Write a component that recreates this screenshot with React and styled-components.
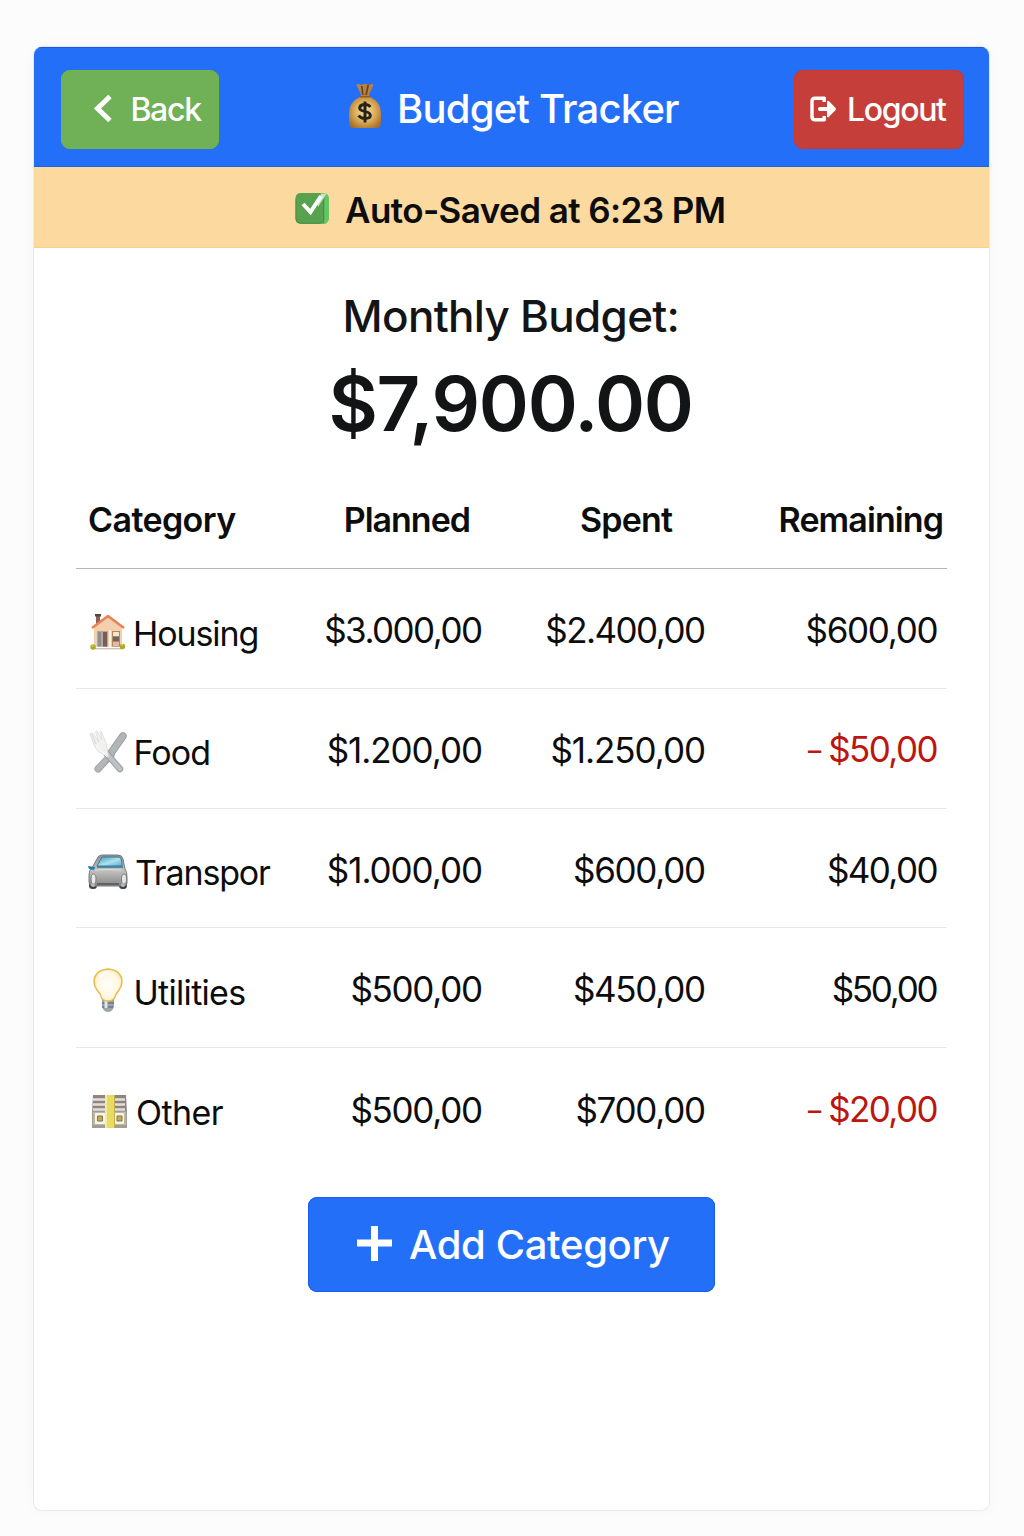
import React from "react";
import styled, { createGlobalStyle } from "styled-components";

const GlobalStyle = createGlobalStyle`
  * { box-sizing: border-box; }
  body {
    margin: 0;
    background: #fcfcfc;
    color: #0d0d0d;
    font-family: Inter, "Liberation Sans", sans-serif;
  }
  svg { display: block; flex: none; }
`;

const Page = styled.div`
  min-height: 1536px;
  padding: 47px 35.5px 25.5px 34px;
`;

const Card = styled.main`
  height: 1463px;
  background: #fff;
  border-radius: 8px;
  overflow: hidden;
  box-shadow: 0 0 0 1px #e9e9ea, 0 0 16px rgba(0, 0, 0, 0.03);
`;

const Text = styled.span`
  display: block;
  white-space: nowrap;
  font-size: ${(p) => p.$size}px;
  line-height: ${(p) => p.$line || 40}px;
  font-weight: ${(p) => p.$weight || 400};
  letter-spacing: ${(p) => p.$spacing || 0}px;
  margin-right: ${(p) => -(p.$spacing || 0)}px;
  padding-top: ${(p) => p.$drop || 0}px;
`;

const Header = styled.header`
  height: 120px;
  padding: 22.5px 24.5px 0 27.4px;
  display: flex;
  align-items: flex-start;
  background: #246ff8;
  color: #fff;
  box-shadow: inset 0 1px #1557ec, inset 0 -1px #1b62ee;
`;

const HeaderButton = styled.button`
  width: ${(p) => p.$width}px;
  height: 79px;
  border: 0;
  border-radius: 9px;
  padding: 0 0 0 ${(p) => p.$inset}px;
  display: flex;
  align-items: center;
  gap: ${(p) => p.$gap}px;
  font-family: inherit;
  color: #fff;
  background: ${(p) => p.$color};
  box-shadow: inset 0 0 0 1px ${(p) => p.$edge};
`;

const Title = styled.h1`
  margin: 0 auto 0 129px;
  height: 77px;
  display: flex;
  align-items: center;
  gap: 15px;

  svg { margin-bottom: 4px; }
`;

const Banner = styled.div`
  height: 81px;
  padding: 2px 0 0 261px;
  display: flex;
  align-items: center;
  gap: 15px;
  background: #fbd99f;
  box-shadow: inset 0 1px #f5df8e, inset 0 -1px #f8d18c;
`;

const Summary = styled.section`
  height: 222px;
  padding-top: 39px;
  display: flex;
  flex-direction: column;
  align-items: center;
  color: #131415;
`;

const Table = styled.section`
  margin: 0 42px;
`;

const Row = styled.div`
  display: grid;
  grid-template-columns: 229px 178px 223px 241px;
  align-items: center;
  height: ${(p) => p.$height || 119.75}px;
  padding-top: ${(p) => p.$top || 0}px;
  border-bottom: ${(p) => (p.$rule ? `1px solid ${p.$rule}` : "0")};
`;

const Cell = styled.div`
  display: flex;
  justify-content: flex-end;
  padding-right: ${(p) => p.$end || 0}px;
  color: ${(p) => (p.$negative ? "#bb1710" : "inherit")};
`;

const Minus = styled.span`
  margin-right: 4px;
  font-size: 29px;
  line-height: 42px;
`;

const Category = styled.div`
  display: flex;
  align-items: center;
  padding: ${(p) => p.$top ?? 7}px 0 0 12px;
  gap: ${(p) => p.$gap || 0}px;
`;

const AddButton = styled.button`
  width: 407px;
  height: 95px;
  margin: 29px auto 0 274px;
  padding: 0 0 0 49px;
  border: 0;
  border-radius: 9px;
  display: flex;
  align-items: center;
  gap: 17px;
  font-family: inherit;
  color: #fff;
  background: #246ff8;
  box-shadow: inset 0 0 0 1px #155cf2;

  svg { margin-bottom: 2px; }
`;

const BackIcon = () => (
  <svg width="20" height="30" viewBox="0 0 20 30" fill="none">
    <path d="M17 2.500 4.500 14.500 17 26.500" stroke="#fff" strokeWidth="5" />
  </svg>
);

const LogoutIcon = () => (
  <svg width="26" height="26" viewBox="0 0 26 26" fill="none">
    <path d="M15 2.200H5Q2 2.200 2 5.200v15.600q0 3 3 3h10M14.200 1v5M14.200 20v5" stroke="#fff" strokeWidth="3.400" />
    <path d="M10 13h9" stroke="#fff" strokeWidth="4" strokeLinecap="round" />
    <path d="M17 5.300q1-1 2 0l6.400 6.500q1 1.200 0 2.400L19 20.700q-1 1-2 0z" fill="#fff" />
  </svg>
);

const MoneyBag = () => (
  <svg width="34" height="46" viewBox="0 0 32 46" preserveAspectRatio="none">
    <defs>
      <radialGradient id="bag" cx="50%" cy="48%" r="60%">
        <stop offset="0" stopColor="#f3dc9b" />
        <stop offset=".5" stopColor="#dfb361" />
        <stop offset="1" stopColor="#aa7027" />
      </radialGradient>
    </defs>
    <path d="M8 2q2-2 4 0 2-1 4-1t4 1q3-2 4 0l-4 9v4h-8v-4z" fill="#b98242" />
    <path d="m13 3 1 9M19 2l-2 10" stroke="#68451f" strokeWidth="1.6" />
    <path d="M11 14q5-2 10 0 10 5 10 16v9q0 6-5 6H6q-5 0-5-6v-9q0-11 10-16z" fill="url(#bag)" />
    <path d="M11 13.800h10" stroke="#8f5d24" strokeWidth="1.600" />
    <path d="M21 24q-2-3-6-2.500-4 .5-4 3.500 0 2.500 5 3.500t5 4q0 3-5 3-4 0-6-3M16 18.500v21" fill="none" stroke="#272318" strokeWidth="2.800" />
  </svg>
);

const CheckIcon = () => (
  <svg width="35" height="33" viewBox="0 0 35 33">
    <path d="M27 1h3q4 1 4 6v19q0 4-4 6h-4z" fill="#62c663" />
    <rect x=".5" y="1" width="29" height="31" rx="5" fill="#58a14e" />
    <path d="M1 7v20q0 4 4 4h22M28.500 8v23" fill="none" stroke="#469242" />
    <path d="m22 10 4-8 6-1-9 14z" fill="#cce0c2" />
    <path d="m8 12 7.500 8L26 4" fill="none" stroke="#fff" strokeWidth="4" />
  </svg>
);

const HouseIcon = () => (
  <svg width="38" height="38" viewBox="0 0 38 38">
    <path d="M7 2h4v12H7z" fill="#896359" />
    <path d="M6 1h6v2.500H6z" fill="#59443c" />
    <path d="M5 14 19 3l14 10v22H5z" fill="#f4cfae" />
    <path d="M3 15 19 3l16 12" fill="none" stroke="#ec8056" strokeWidth="2.600" strokeLinejoin="round" />
    <path d="M8 18h11v17H8z" fill="#c99f89" />
    <path d="M9 19h3v15H9z" fill="#83939a" />
    <path d="M14 19h4v16h-4z" fill="#765f5b" />
    <path d="M20 17h2v17h-2z" fill="#fff1dd" />
    <path d="M23 18h8v16h-8z" fill="#b5846b" />
    <path d="M24 19h6v4h-6z" fill="#f4e8cb" />
    <path d="M24 24h6v4h-6z" fill="#6b675c" />
    <path d="M24 29h6v4h-6z" fill="#e2baa0" />
    <path d="M5 35.500h29" stroke="#bdaaa2" strokeWidth="1.500" />
    <path d="M7 34.500h24" stroke="#fff" strokeWidth="1.500" />
    <g fill="#a9aa25"><circle cx="4" cy="34" r="2.700" /><circle cx="33.500" cy="33.500" r="2.700" /></g>
    <g fill="#d8cf48"><circle cx="3.500" cy="33" r="1" /><circle cx="33" cy="32" r="1" /></g>
  </svg>
);

const CutleryIcon = () => (
  <svg width="40" height="44" viewBox="0 0 40 44">
    <path d="M34 6 22 23" stroke="#92979a" strokeWidth="7.500" strokeLinecap="round" />
    <path d="M34 6 22 23" stroke="#b0b5b8" strokeWidth="6" strokeLinecap="round" />
    <path d="M22 25 9 39" stroke="#989da0" strokeWidth="7" strokeLinecap="round" />
    <path d="M22 24 9 39" stroke="#b3b7b9" strokeWidth="5.500" strokeLinecap="round" />
    <path d="m18 24 13 15" stroke="#9b9fa1" strokeWidth="6.500" strokeLinecap="round" />
    <path d="m17 23 14 16" stroke="#bec1c3" strokeWidth="4.500" strokeLinecap="round" />
    <path d="m1 4 5 13q3 6 8 7l6 3-2-8q0-6-3-11L12 1l-1 .5 2 8L8 1 6.500 2 10 12 4 3 3 4l4 10L2 3z" fill="#f1f1ef" stroke="#d6d6d3" strokeWidth=".7" />
    <path d="m7 15 11 12" stroke="#fff" strokeWidth="1" />
  </svg>
);

const CarIcon = () => (
  <svg width="40" height="38" viewBox="0 0 40 38">
    <defs>
      <linearGradient id="body" x2="0" y2="1"><stop stopColor="#8e9498" /><stop offset=".5" stopColor="#c2c1bf" /><stop offset="1" stopColor="#868788" /></linearGradient>
      <linearGradient id="glass" x2="1" y2="1"><stop stopColor="#4693bc" /><stop offset=".55" stopColor="#ace3ed" /><stop offset="1" stopColor="#5aadd1" /></linearGradient>
    </defs>
    <rect x="1" y="26" width="8" height="10" rx="3.500" fill="#3f4244" />
    <rect x="31" y="26" width="8" height="10" rx="3.500" fill="#3f4244" />
    <path d="m4 15 6-11q1-2 5-2h15q4 0 5 4l2 10q2 3 2 8v6q0 3-3 3H5q-4 0-4-4v-7q0-5 3-7z" fill="url(#body)" stroke="#777a7c" />
    <path d="M14 4h17q3 1 3 9L9 13z" fill="url(#glass)" stroke="#397998" />
    <path d="m0 13 7 1-1 3-5-1z" fill="#237bb0" />
    <path d="M9 14h26" stroke="#327aa1" strokeWidth="1.500" />
    <path d="M7 17q13-1 26 0" stroke="#e0dfdc" fill="none" />
    <path d="M9 31h22" stroke="#5c5f61" strokeWidth="1.800" />
    <g fill="#e6e8e6" stroke="#797e81"><ellipse cx="5.500" cy="26" rx="2.500" ry="5" /><ellipse cx="36" cy="26" rx="2.500" ry="5" /></g>
    <circle cx="5" cy="32" r="2" fill="#b5b7b7" /><circle cx="35" cy="32" r="2" fill="#b5b7b7" />
  </svg>
);

const BulbIcon = () => (
  <svg width="30" height="46" viewBox="0 0 30 46">
    <defs><radialGradient id="bulb"><stop stopColor="#fffefa" /><stop offset=".75" stopColor="#fff9e2" /><stop offset="1" stopColor="#faedbb" /></radialGradient></defs>
    <path d="M9 31h12v8q-2 5-6 5t-6-5z" fill="#9ca4ac" />
    <path d="M9 35h12M9 39h11" stroke="#6a7888" strokeWidth="1.500" />
    <path d="M13 32v8" stroke="#e2e5e6" strokeWidth="3" />
    <path d="M9 31q-1-5-5-9-3-4-3-9Q2 2 15 1q13 1 14 12 0 5-3 9-4 5-5 9-6 4-12 0z" fill="url(#bulb)" stroke="#e9ba50" strokeWidth="1.500" />
    <path d="M7 9q3-4 8-5" fill="none" stroke="#fff" strokeWidth="3" />
  </svg>
);

const CashIcon = () => (
  <svg width="37" height="34" viewBox="0 0 37 34">
    <path d="M2 0h33l1 18H1z" fill="#8d8580" />
    <path d="M2 4.500h32M2 9.500h32M2 14.500h32" stroke="#e6dfd9" strokeWidth="2.300" />
    <path d="M1 16h35v17H1z" fill="#a39c91" />
    <path d="M2 17h33v13H2z" fill="#bdb6aa" />
    <g fill="#f8f3e3"><path d="M4 18h10v11H4zM23 18h10v11H23z" /></g>
    <g fill="#c7ac49" stroke="#79735f"><path d="M6.500 21h5v5h-5zM26 21h5v5h-5z" /></g>
    <path d="M14 0h10v33H14z" fill="#e8db65" />
    <path d="M15 0v33" stroke="#f6ec91" strokeWidth="2" />
    <path d="M23.500 0v33" stroke="#c3b242" />
  </svg>
);

const PlusIcon = () => (
  <svg width="35" height="35" viewBox="0 0 35 35">
    <path d="M17.500 0v35M0 17h35" stroke="#fff" strokeWidth="7" />
  </svg>
);

const rows = [
  { name: "Housing", Icon: HouseIcon, gap: 6, spacing: -1.1, inset: 1, planned: "$3.000,00", spent: "$2.400,00", remaining: "$600,00" },
  { name: "Food", Icon: CutleryIcon, gap: 4.5, spacing: -0.9, inset: 1, planned: "$1.200,00", spent: "$1.250,00", remaining: "−$50,00" },
  { name: "Transpor", Icon: CarIcon, gap: 7, spacing: -1.15, planned: "$1.000,00", spent: "$600,00", remaining: "$40,00" },
  { name: "Utilities", Icon: BulbIcon, gap: 10.5, inset: 5, spacing: -0.7, planned: "$500,00", spent: "$450,00", remaining: "$50,00" },
  { name: "Other", Icon: CashIcon, gap: 8, inset: 3, spacing: -0.6, planned: "$500,00", spent: "$700,00", remaining: "−$20,00" },
];

const IconSlot = styled.span`
  padding-left: ${(p) => p.$inset || 0}px;
  padding-bottom: 3px;
`;

const amountSpacing = (value) => {
  if (value.startsWith("$1")) return -1.05;
  if (value.length === 6) return value === "$50,00" ? -2.3 : -1.6;
  return value.length > 7 ? -1.55 : -1.3;
};

const Amount = ({ value, end }) => {
  const negative = value.startsWith("−");
  return (
    <Cell $end={end} $negative={negative}>
      {negative && <Minus>−</Minus>}
      <Text $size={35} $spacing={negative ? -1.6 : amountSpacing(value)}>
        {negative ? value.slice(1) : value}
      </Text>
    </Cell>
  );
};

export default function App() {
  return (
    <>
      <GlobalStyle />
      <Page>
        <Card>
          <Header>
            <HeaderButton $width={157.6} $inset={32} $gap={17} $color="#70b056" $edge="#70b63f">
              <BackIcon />
              <Text $size={32} $weight={500} $spacing={-1.3} $drop={1}>Back</Text>
            </HeaderButton>
            <Title>
              <MoneyBag />
              <Text $size={40} $line={48} $weight={500} $spacing={-0.8} $drop={1}>Budget Tracker</Text>
            </Title>
            <HeaderButton $width={170} $inset={16} $gap={11} $color="#c63e39" $edge="#d13525">
              <LogoutIcon />
              <Text $size={32} $weight={500} $spacing={-1.35} $drop={1}>Logout</Text>
            </HeaderButton>
          </Header>
          <Banner>
            <CheckIcon />
            <Text $size={35} $weight={600} $spacing={-0.58} $drop={2}>Auto-Saved at 6:23 PM</Text>
          </Banner>
          <Summary>
            <Text $size={44} $line={58} $weight={500} $spacing={-0.7}>Monthly Budget:</Text>
            <Text $size={76} $line={117} $weight={600} $spacing={-1.35}>$7,900.00</Text>
          </Summary>
          <Table>
            <Row $height={99.2} $top={1} $rule="#b5b5b5">
              <Category $top={0}><Text $size={34} $weight={600} $spacing={-0.6}>Category</Text></Category>
              <Cell $end={12}><Text $size={34} $weight={600} $spacing={-1}>Planned</Text></Cell>
              <Cell $end={33}><Text $size={34} $weight={600} $spacing={-0.8}>Spent</Text></Cell>
              <Cell $end={3}><Text $size={34} $weight={600} $spacing={-0.9}>Remaining</Text></Cell>
            </Row>
            {rows.map(({ name, Icon, gap, inset, spacing, planned, spent, remaining }, i) => (
              <Row key={name} $top={3} $rule={i < rows.length - 1 ? "#e7e7e7" : undefined}>
                <Category $gap={gap}>
                  <IconSlot $inset={inset}><Icon /></IconSlot>
                  <Text $size={34} $spacing={spacing}>{name}</Text>
                </Category>
                <Amount value={planned} />
                <Amount value={spent} />
                <Amount value={remaining} end={8.5} />
              </Row>
            ))}
          </Table>
          <AddButton>
            <PlusIcon />
            <Text $size={40} $line={48} $weight={500} $spacing={-0.35} $drop={2}>Add Category</Text>
          </AddButton>
        </Card>
      </Page>
    </>
  );
}
